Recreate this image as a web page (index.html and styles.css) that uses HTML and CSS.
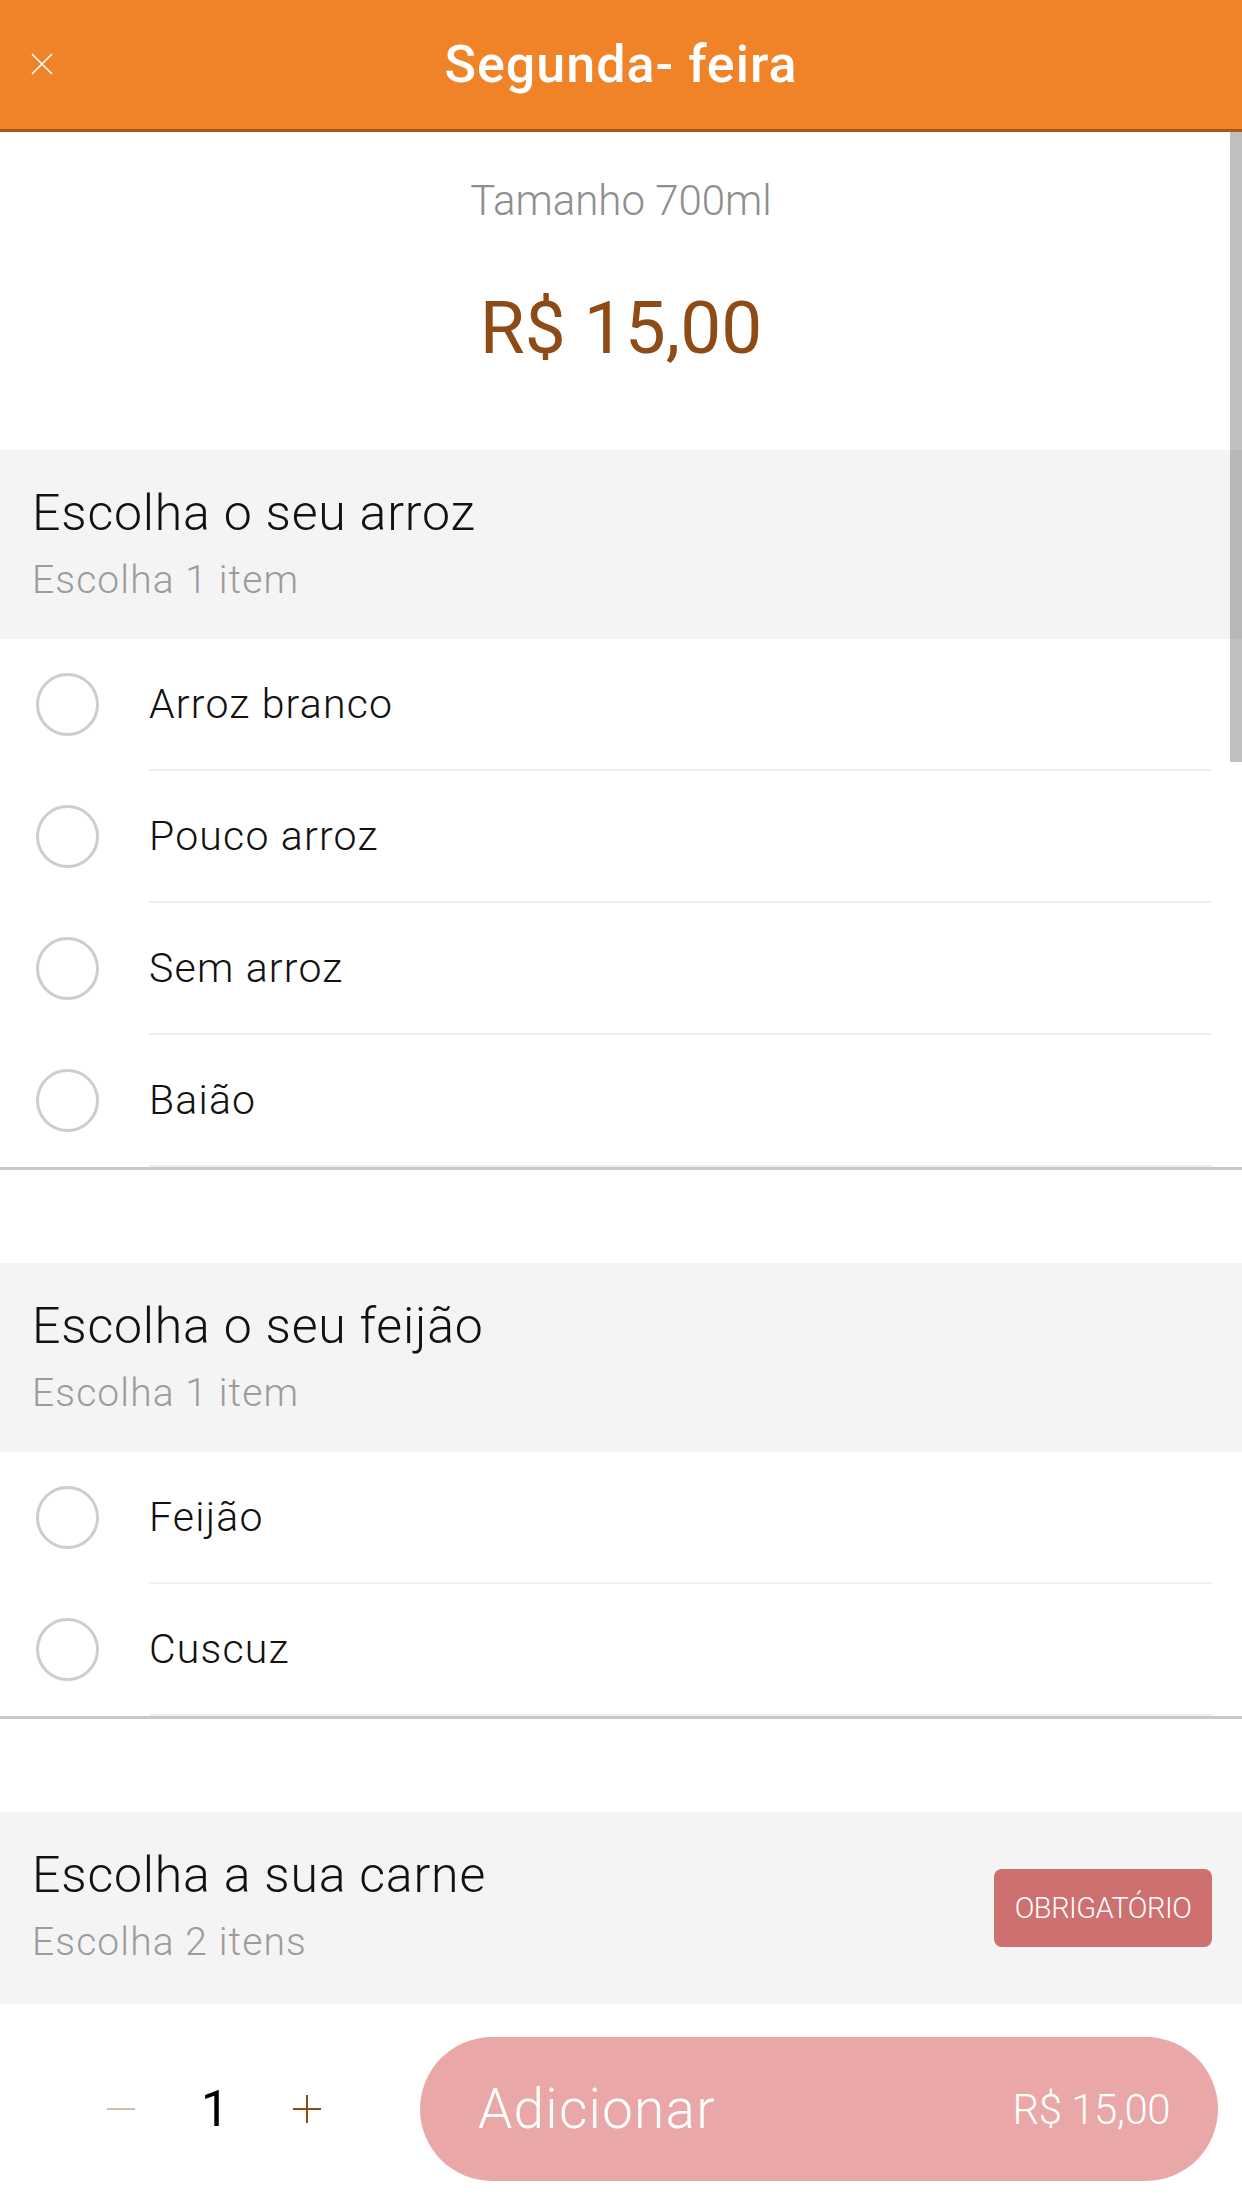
FILE: index.html
```html
<!DOCTYPE html>
<html lang="pt-BR">
<head>
<meta charset="utf-8">
<title>Segunda- feira</title>
<link rel="stylesheet" href="styles.css">
</head>
<body>
<div class="screen">
  <header class="topbar">
    <button class="close" aria-label="Fechar">
      <svg width="24" height="24" viewBox="0 0 24 24"><path d="M2 2 L22 22 M22 2 L2 22" stroke="#fff" stroke-width="1.6" fill="none"/></svg>
    </button>
    <h1 class="title">Segunda- feira</h1>
  </header>

  <main class="content">
    <div class="scrollbar"></div>
    <section class="intro">
      <p class="size">Tamanho 700ml</p>
      <p class="price">R$ 15,00</p>
    </section>

    <section class="group">
      <div class="group-head">
        <div class="head-text">
          <h2 class="group-title">Escolha o seu arroz</h2>
          <p class="group-sub">Escolha 1 item</p>
        </div>
      </div>
      <div class="option"><span class="radio"></span><span class="label">Arroz branco</span></div>
      <div class="option"><span class="radio"></span><span class="label">Pouco arroz</span></div>
      <div class="option"><span class="radio"></span><span class="label">Sem arroz</span></div>
      <div class="option"><span class="radio"></span><span class="label">Baião</span></div>
    </section>

    <section class="group">
      <div class="group-head">
        <div class="head-text">
          <h2 class="group-title">Escolha o seu feijão</h2>
          <p class="group-sub">Escolha 1 item</p>
        </div>
      </div>
      <div class="option"><span class="radio"></span><span class="label">Feijão</span></div>
      <div class="option"><span class="radio"></span><span class="label">Cuscuz</span></div>
    </section>

    <section class="group">
      <div class="group-head">
        <div class="head-text">
          <h2 class="group-title">Escolha a sua carne</h2>
          <p class="group-sub">Escolha 2 itens</p>
        </div>
        <span class="badge">OBRIGATÓRIO</span>
      </div>
    </section>
  </main>

  <footer class="bottombar">
    <div class="qty">
      <span class="minus"></span>
      <span class="count">1</span>
      <span class="plus"></span>
    </div>
    <button class="add">
      <span class="add-label">Adicionar</span>
      <span class="add-price">R$ 15,00</span>
    </button>
  </footer>
</div>
</body>
</html>
```

FILE: styles.css
```css
* { box-sizing: border-box; }
html, body { margin: 0; padding: 0; }
body {
  font-family: Roboto, "Noto Sans", sans-serif;
  background: #fff;
  color: #111;
}
.screen {
  width: 1242px;
  height: 2208px;
  display: flex;
  flex-direction: column;
  overflow: hidden;
}
.topbar {
  height: 132px;
  flex: none;
  background: #f08327;
  border-bottom: 3px solid #a8581d;
  display: flex;
  align-items: center;
  justify-content: center;
  position: relative;
}
.close {
  position: absolute;
  left: 30px;
  top: 52px;
  width: 24px;
  height: 24px;
  padding: 0;
  border: 0;
  background: none;
  display: block;
}
.close svg { display: block; }
.title {
  margin: 0;
  font-size: 52px;
  font-weight: 500;
  color: #fff;
  line-height: 60px;
  letter-spacing: 1px;
}
.content {
  flex: 1;
  overflow: hidden;
  position: relative;
}
.scrollbar {
  position: absolute;
  right: 0;
  top: 0;
  width: 12px;
  height: 630px;
  background: rgba(0, 0, 0, 0.25);
  z-index: 2;
}
.intro {
  height: 318px;
  padding-top: 44px;
  text-align: center;
}
.size {
  margin: 0;
  font-size: 42px;
  line-height: 50px;
  font-weight: 300;
  color: #8e8e8e;
}
.price {
  margin: 58px 0 0;
  font-size: 73px;
  line-height: 88px;
  font-weight: 400;
  color: #8e4b16;
}
.group {
  border-bottom: 3px solid #c9c9c9;
}
.group + .group {
  margin-top: 93px;
}
.group:last-child { border-bottom: 0; }
.group-head {
  background: #f4f4f4;
  height: 189px;
  padding: 33px 30px 0 32px;
  display: flex;
  align-items: flex-start;
  justify-content: space-between;
}
.group:last-child .group-head { height: 192px; }
.group-title {
  margin: 0;
  font-size: 50px;
  line-height: 60px;
  font-weight: 300;
  letter-spacing: 0.8px;
  color: #111;
}
.group-sub {
  margin: 14px 0 0;
  font-size: 39px;
  line-height: 46px;
  font-weight: 300;
  letter-spacing: 1.1px;
  color: #9c9c9c;
}
.badge {
  margin-top: 24px;
  width: 218px;
  height: 78px;
  border-radius: 8px;
  background: #ce6f70;
  color: #fff;
  font-size: 29px;
  font-weight: 300;
  letter-spacing: -0.5px;
  display: flex;
  align-items: center;
  justify-content: center;
}
.option {
  height: 132px;
  display: flex;
  align-items: stretch;
  padding-left: 36px;
}
.radio {
  flex: none;
  align-self: center;
  width: 63px;
  height: 63px;
  border-radius: 50%;
  border: 3px solid #cdcdcd;
  margin-top: -2px;
}
.label {
  flex: 1;
  margin-left: 50px;
  margin-right: 30px;
  border-bottom: 2px solid #efefef;
  display: flex;
  align-items: center;
  font-size: 41px;
  font-weight: 300;
  letter-spacing: 1.2px;
  color: #111;
}
.bottombar {
  height: 204px;
  flex: none;
  display: flex;
  align-items: flex-start;
  padding: 33px 24px 0 0;
}
.qty {
  width: 420px;
  height: 144px;
  display: flex;
  align-items: center;
  padding-left: 107px;
}
.minus {
  width: 28px;
  height: 2px;
  background: #d6bba3;
}
.count {
  width: 60px;
  margin-left: 50px;
  margin-right: 48px;
  text-align: center;
  font-size: 50px;
  font-weight: 400;
  color: #000;
}
.plus {
  width: 28px;
  height: 28px;
  position: relative;
}
.plus::before, .plus::after {
  content: "";
  position: absolute;
  background: #8e4b16;
}
.plus::before { left: 0; right: 0; top: 13px; height: 2px; }
.plus::after { top: 0; bottom: 0; left: 13px; width: 2px; }
.add {
  flex: 1;
  height: 144px;
  border: 0;
  border-radius: 72px;
  background: #e9a7a8;
  color: #fff;
  display: flex;
  align-items: center;
  justify-content: space-between;
  padding: 0 48px 0 58px;
  font-family: inherit;
}
.add-label {
  font-size: 55px;
  font-weight: 300;
  letter-spacing: 1.2px;
}
.add-price {
  font-size: 42px;
  font-weight: 300;
  letter-spacing: -0.5px;
}
```
